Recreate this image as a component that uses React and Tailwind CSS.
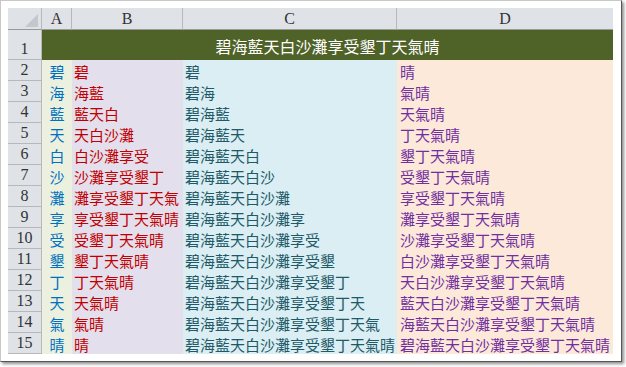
const title = '碧海藍天白沙灘享受墾丁天氣晴';

const cjk = { fontFamily: '"Noto Sans CJK TC", "Noto Sans CJK SC", sans-serif' };
const hdr = { fontFamily: '"Liberation Serif", serif' };

function ColHead({ label, last }) {
  return (
    <div
      className={`h-[22px] bg-[#dfe3e8] border-b border-b-[#9a9a9a] flex items-center justify-center text-[16px] text-[#333] ${last ? '' : 'border-r border-r-[#b8b8b8]'}`}
      style={hdr}
    >
      {label}
    </div>
  );
}

function RowHead({ n, tall }) {
  return (
    <div
      className={`${tall ? 'h-[30px] items-end pb-[1px]' : 'h-[21px] items-center'} bg-[#dfe3e8] border-r border-b border-[#b8b8b8] flex justify-center text-[16px] leading-[18px] text-[#333]`}
      style={hdr}
    >
      {n}
    </div>
  );
}

function Cell({ text, className }) {
  return (
    <div
      className={`h-[21px] flex items-center pt-[2px] text-[15px] leading-[21px] whitespace-nowrap overflow-hidden ${className}`}
      style={cjk}
    >
      {text}
    </div>
  );
}

export default function App() {
  const rows = Array.from({ length: 14 }, (_, i) => ({
    n: i + 2,
    a: title[i],
    b: title.substr(i, Math.min(i + 1, 14 - i)),
    c: title.substr(0, i + 1),
    d: title.substr(13 - i),
  }));

  return (
    <div className="w-[626px] h-[367px] bg-white">
      <div className="w-[622px] h-[362px] bg-white border border-t-[#c8c8c8] border-l-[#c8c8c8] border-r-[#555] border-b-[#555] shadow-[2px_2px_3px_rgba(0,0,0,0.45)] pt-[7px] pl-[7px]">
        <div className="grid grid-cols-[34px_30px_111px_214px_216px] w-[605px]">
          {/* header row */}
          <div className="h-[22px] bg-[#dfe3e8] border-b border-b-[#9a9a9a] border-r border-r-[#b8b8b8] relative">
            <svg className="absolute right-[3px] bottom-[2px]" width="13" height="13" viewBox="0 0 13 13">
              <polygon points="13,0 13,13 0,13" fill="#c4c7cc" />
            </svg>
          </div>
          <ColHead label="A" />
          <ColHead label="B" />
          <ColHead label="C" />
          <ColHead label="D" last />

          {/* row 1 */}
          <RowHead n={1} tall />
          <div
            className="col-span-4 h-[30px] bg-[#4f6228] text-white text-[16px] flex items-center justify-center pt-[1px]"
            style={cjk}
          >
            {title}
          </div>

          {rows.map(r => (
            <div key={r.n} className="contents">
              <RowHead n={r.n} />
              <Cell text={r.a} className="bg-[#ebf1de] text-[#0070c0] justify-center" />
              <Cell text={r.b} className="bg-[#e4dfec] text-[#c00000] pl-[2px]" />
              <Cell text={r.c} className="bg-[#daeef3] text-[#215967] pl-[2px]" />
              <Cell text={r.d} className="bg-[#fde9d9] text-[#7030a0] pl-[3px]" />
            </div>
          ))}
        </div>
      </div>
    </div>
  );
}
